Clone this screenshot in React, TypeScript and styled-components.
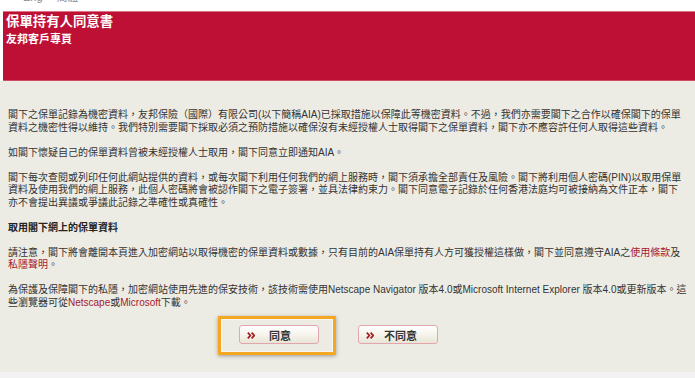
import React from "react";
import styled, { createGlobalStyle } from "styled-components";

const GlobalStyle = createGlobalStyle`
  html, body {
    margin: 0;
    padding: 0;
    background: #f2f2f2;
  }
  body {
    font-family: "Liberation Sans", "Noto Sans CJK TC", sans-serif;
  }
`;

const Header = styled.header`
  background: #ffffff;
  padding-left: 3px;
`;

const LangBar = styled.nav`
  height: 11px;
  overflow: hidden;
  display: flex;
  gap: 14px;
  padding-left: 20px;
`;

const LangLink = styled.a`
  font-size: 11px;
  line-height: 11px;
  margin-top: -8px;
  color: #8a8a8a;
  text-decoration: none;
`;

const Banner = styled.div`
  height: 67px;
  background: #be1034;
  border-top: 1px solid #d77585;
  border-bottom: 1px solid #cf4a62;
  padding: 1px 3px 0;
  color: #ffffff;
`;

const Title = styled.h1`
  margin: 0;
  font-size: 13.4px;
  line-height: 17px;
  font-weight: bold;
`;

const Subtitle = styled.h2`
  margin: 1px 0 0;
  font-size: 11px;
  line-height: 16px;
  font-weight: bold;
`;

const Content = styled.main`
  background: #edece4;
  padding: 28px 2px 28px 8px;
  font-size: 10px;
  line-height: 12.5px;
  color: #333333;
`;

const Para = styled.p`
  margin: 0 0 12.5px;
`;

const SectionTitle = styled.h3`
  margin: 0 0 12.5px;
  font-size: 10px;
  line-height: 12.5px;
  font-weight: bold;
  color: #222222;
`;

const TextLink = styled.a`
  color: #a6192e;
  text-decoration: none;
`;

const ButtonRow = styled.div`
  display: flex;
  gap: 39px;
  padding-left: 231px;
  margin-top: 16px;
`;

const ButtonSlot = styled.div`
  position: relative;
  display: flex;
`;

const FocusRing = styled.span`
  position: absolute;
  top: -9px;
  left: -21px;
  right: -17px;
  bottom: -11px;
  border: 3px solid #f5a623;
  box-shadow: 0 1px 4px rgba(0, 0, 0, 0.35),
    inset 0 0 0 1px rgba(255, 255, 255, 0.5);
  pointer-events: none;
`;

const ActionButton = styled.button<{ $gap: number }>`
  width: 80px;
  height: 19px;
  box-sizing: border-box;
  display: flex;
  align-items: center;
  gap: ${(p) => p.$gap}px;
  padding: 1px 0 0 7px;
  border: 1px solid #e2a6ae;
  border-radius: 3px;
  background: linear-gradient(#ffffff 0%, #f6f4ec 50%, #e8e5d7 100%);
  font-family: "Liberation Sans", "Noto Sans CJK TC", sans-serif;
  font-size: 11px;
  font-weight: bold;
  color: #333333;
  cursor: pointer;
`;

const Chevrons = () => (
  <svg width="8" height="7" viewBox="0 0 8 7" fill="none">
    <path d="M0.8 0.6 L3.4 3.5 L0.8 6.4" stroke="#a31e22" strokeWidth="1.7" />
    <path d="M4.6 0.6 L7.2 3.5 L4.6 6.4" stroke="#a31e22" strokeWidth="1.7" />
  </svg>
);

export default function App() {
  return (
    <>
      <GlobalStyle />
      <Header>
        <LangBar>
          <LangLink href="#">Eng</LangLink>
          <LangLink href="#">簡體</LangLink>
        </LangBar>
        <Banner>
          <Title>保單持有人同意書</Title>
          <Subtitle>友邦客戶專頁</Subtitle>
        </Banner>
      </Header>
      <Content>
        <Para>
          閣下之保單記錄為機密資料，友邦保險（國際）有限公司(以下簡稱AIA)已採取措施以保障此等機密資料。不過，我們亦需要閣下之合作以確保閣下的保單
          <br />
          資料之機密性得以維持。我們特別需要閣下採取必須之預防措施以確保沒有未經授權人士取得閣下之保單資料，閣下亦不應容許任何人取得這些資料。
        </Para>
        <Para>如閣下懷疑自己的保單資料曾被未經授權人士取用，閣下同意立即通知AIA。</Para>
        <Para>
          閣下每次查閱或列印任何此網站提供的資料，或每次閣下利用任何我們的網上服務時，閣下須承擔全部責任及風險。閣下將利用個人密碼(PIN)以取用保單
          <br />
          資料及使用我們的網上服務，此個人密碼將會被認作閣下之電子簽署，並具法律約束力。閣下同意電子記錄於任何香港法庭均可被接納為文件正本，閣下
          <br />
          亦不會提出異議或爭議此記錄之準確性或真確性。
        </Para>
        <SectionTitle>取用閣下網上的保單資料</SectionTitle>
        <Para>
          請注意，閣下將會離開本頁進入加密網站以取得機密的保單資料或數據，只有目前的AIA保單持有人方可獲授權這樣做，閣下並同意遵守AIA之
          <TextLink href="#">使用條款</TextLink>及
          <br />
          <TextLink href="#">私隱聲明</TextLink>。
        </Para>
        <Para style={{ marginBottom: 0 }}>
          為保護及保障閣下的私隱，加密網站使用先進的保安技術，該技術需使用Netscape Navigator 版本4.0或Microsoft Internet Explorer 版本4.0或更新版本。這
          <br />
          些瀏覽器可從<TextLink href="#">Netscape</TextLink>或
          <TextLink href="#">Microsoft</TextLink>下載。
        </Para>
        <ButtonRow>
          <ButtonSlot>
            <ActionButton $gap={14}>
              <Chevrons />
              同意
            </ActionButton>
            <FocusRing />
          </ButtonSlot>
          <ButtonSlot>
            <ActionButton $gap={10}>
              <Chevrons />
              不同意
            </ActionButton>
          </ButtonSlot>
        </ButtonRow>
      </Content>
    </>
  );
}
